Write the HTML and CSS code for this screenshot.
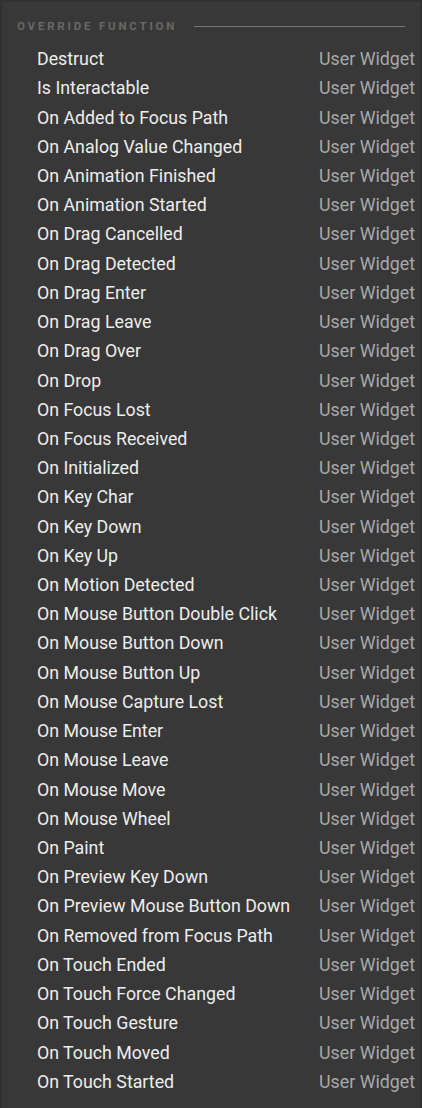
FILE: index.html
```html
<!DOCTYPE html>
<html lang="en">
<head>
    <meta charset="UTF-8">
    <meta name="viewport" content="width=device-width, initial-scale=1.0">
    <title>Override Function</title>
    <link rel="stylesheet" href="styles.css">
</head>
<body>
    <div class="panel">
        <!-- Encabezado -->
        <div class="section-header">
            <span class="section-title">Override Function</span>
            <span class="section-line"></span>
        </div>

        <ul class="function-list">
            <li class="function-row"><span class="fn-name">Destruct</span><span class="fn-owner">User Widget</span></li>
            <li class="function-row"><span class="fn-name">Is Interactable</span><span class="fn-owner">User Widget</span></li>
            <li class="function-row"><span class="fn-name">On Added to Focus Path</span><span class="fn-owner">User Widget</span></li>
            <li class="function-row"><span class="fn-name">On Analog Value Changed</span><span class="fn-owner">User Widget</span></li>
            <li class="function-row"><span class="fn-name">On Animation Finished</span><span class="fn-owner">User Widget</span></li>
            <li class="function-row"><span class="fn-name">On Animation Started</span><span class="fn-owner">User Widget</span></li>
            <li class="function-row"><span class="fn-name">On Drag Cancelled</span><span class="fn-owner">User Widget</span></li>
            <li class="function-row"><span class="fn-name">On Drag Detected</span><span class="fn-owner">User Widget</span></li>
            <li class="function-row"><span class="fn-name">On Drag Enter</span><span class="fn-owner">User Widget</span></li>
            <li class="function-row"><span class="fn-name">On Drag Leave</span><span class="fn-owner">User Widget</span></li>
            <li class="function-row"><span class="fn-name">On Drag Over</span><span class="fn-owner">User Widget</span></li>
            <li class="function-row"><span class="fn-name">On Drop</span><span class="fn-owner">User Widget</span></li>
            <li class="function-row"><span class="fn-name">On Focus Lost</span><span class="fn-owner">User Widget</span></li>
            <li class="function-row"><span class="fn-name">On Focus Received</span><span class="fn-owner">User Widget</span></li>
            <li class="function-row"><span class="fn-name">On Initialized</span><span class="fn-owner">User Widget</span></li>
            <li class="function-row"><span class="fn-name">On Key Char</span><span class="fn-owner">User Widget</span></li>
            <li class="function-row"><span class="fn-name">On Key Down</span><span class="fn-owner">User Widget</span></li>
            <li class="function-row"><span class="fn-name">On Key Up</span><span class="fn-owner">User Widget</span></li>
            <li class="function-row"><span class="fn-name">On Motion Detected</span><span class="fn-owner">User Widget</span></li>
            <li class="function-row"><span class="fn-name">On Mouse Button Double Click</span><span class="fn-owner">User Widget</span></li>
            <li class="function-row"><span class="fn-name">On Mouse Button Down</span><span class="fn-owner">User Widget</span></li>
            <li class="function-row"><span class="fn-name">On Mouse Button Up</span><span class="fn-owner">User Widget</span></li>
            <li class="function-row"><span class="fn-name">On Mouse Capture Lost</span><span class="fn-owner">User Widget</span></li>
            <li class="function-row"><span class="fn-name">On Mouse Enter</span><span class="fn-owner">User Widget</span></li>
            <li class="function-row"><span class="fn-name">On Mouse Leave</span><span class="fn-owner">User Widget</span></li>
            <li class="function-row"><span class="fn-name">On Mouse Move</span><span class="fn-owner">User Widget</span></li>
            <li class="function-row"><span class="fn-name">On Mouse Wheel</span><span class="fn-owner">User Widget</span></li>
            <li class="function-row"><span class="fn-name">On Paint</span><span class="fn-owner">User Widget</span></li>
            <li class="function-row"><span class="fn-name">On Preview Key Down</span><span class="fn-owner">User Widget</span></li>
            <li class="function-row"><span class="fn-name">On Preview Mouse Button Down</span><span class="fn-owner">User Widget</span></li>
            <li class="function-row"><span class="fn-name">On Removed from Focus Path</span><span class="fn-owner">User Widget</span></li>
            <li class="function-row"><span class="fn-name">On Touch Ended</span><span class="fn-owner">User Widget</span></li>
            <li class="function-row"><span class="fn-name">On Touch Force Changed</span><span class="fn-owner">User Widget</span></li>
            <li class="function-row"><span class="fn-name">On Touch Gesture</span><span class="fn-owner">User Widget</span></li>
            <li class="function-row"><span class="fn-name">On Touch Moved</span><span class="fn-owner">User Widget</span></li>
            <li class="function-row"><span class="fn-name">On Touch Started</span><span class="fn-owner">User Widget</span></li>
        </ul>
    </div>
</body>
</html>
```

FILE: styles.css
```css
html, body {
    margin: 0;
    padding: 0;
    background-color: #383838;
}
body {
    font-family: Roboto, "Liberation Sans", sans-serif;
}
.panel {
    box-sizing: border-box;
    width: 422px;
    height: 1108px;
    background-color: #383838;
    border-top: 2px solid #313131;
    border-left: 2px solid #303030;
    border-right: 2px solid #303030;
    overflow: hidden;
}
.section-header {
    display: flex;
    align-items: center;
    gap: 17px;
    height: 20px;
    margin: 14px 15px 0 15px;
}
.section-title {
    font-size: 11.5px;
    font-weight: bold;
    letter-spacing: 2.8px;
    text-transform: uppercase;
    color: #686868;
}
.section-line {
    flex: 1;
    height: 1px;
    background-color: #767676;
}
.function-list {
    list-style: none;
    margin: 8px 0 0 0;
    padding: 0 5px 0 35px;
}
.function-row {
    display: flex;
    justify-content: space-between;
    align-items: center;
    height: 29.22px;
    font-size: 17.8px;
}
.fn-name {
    color: #ededed;
}
.fn-owner {
    color: #a9a9a9;
}
```
